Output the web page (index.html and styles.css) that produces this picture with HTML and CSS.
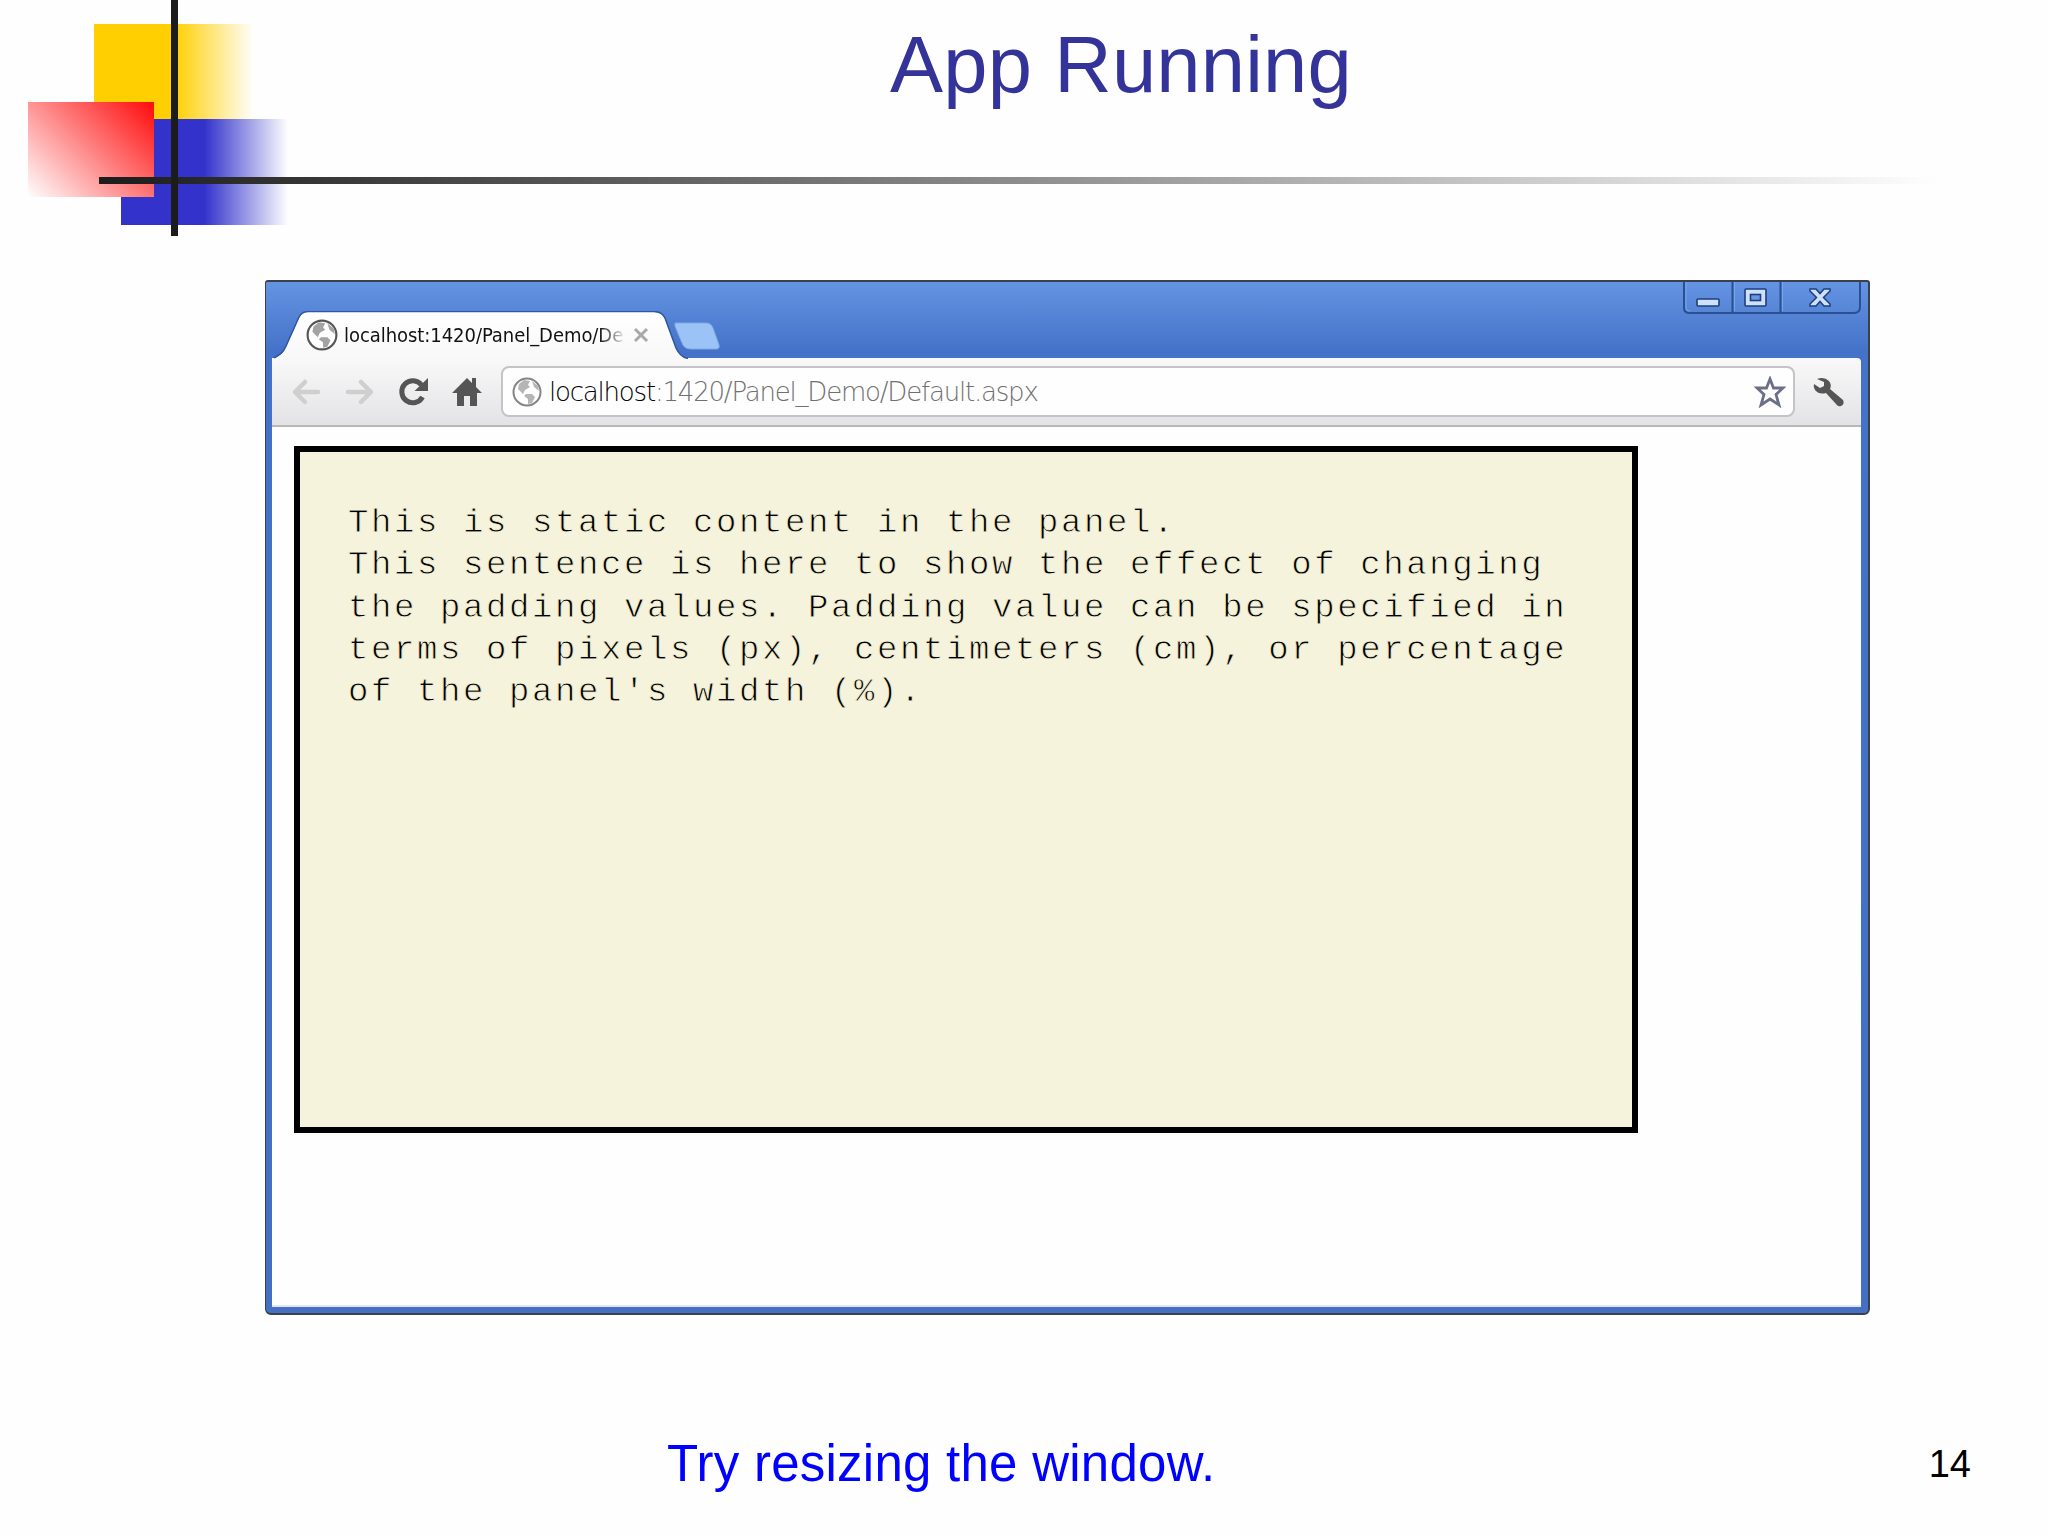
FILE: index.html
```html
<!DOCTYPE html>
<html lang="en">
<head>
  <meta charset="UTF-8" />
  <meta name="viewport" content="width=device-width, initial-scale=1.0"/>
  <title>App Running</title>
  <link rel="stylesheet" href="styles.css">
</head>
<body>
<div class="slide">
  <!-- Slide theme decoration -->
  <div class="deco" aria-hidden="true">
    <div class="square yellow"></div>
    <div class="square blue"></div>
    <div class="square red"></div>
    <div class="bar-h"></div>
    <div class="bar-v"></div>
  </div>
  <h1>App Running</h1>

  <div class="window">
    <div class="titlebar">
      <svg class="tab-shape" width="420" height="48" viewBox="0 0 420 48">
        <defs>
          <linearGradient id="tabFill" x1="0" y1="0" x2="0" y2="1">
            <stop offset="0" stop-color="#ffffff"/>
            <stop offset="1" stop-color="#f8f8f9"/>
          </linearGradient>
        </defs>
        <path d="M0 48 C6 44 9 43 12 36 L25 7 Q28 1 34 1 H380 Q388 1 391 8 L402 37 Q406 46 413 48 Z" fill="url(#tabFill)"/>
        <path d="M0 47 C6 43 9 42 12 35 L25 6 Q28 0.5 34 0.5 H380 Q388 0.5 391 7 L402 37 Q406 46 414 47.5" fill="none" stroke="#2f57a0" stroke-width="1.5"/>
      </svg>
      <div class="tab">
        <svg class="globe" width="32" height="32" viewBox="0 0 30 30">
          <circle cx="15" cy="15" r="13.5" fill="#fff" stroke="#555" stroke-width="2"/>
          <path d="M7 7 L12 3 L18 4 L16 8 L18 10 L13 13 L11 17 L6 12 Z M20 4 L26 9 L27 14 L22 10 Z M14 17 L20 17 L23 20 L20 26 L16 27 L16 22 L12 19 Z" fill="#a3a3a3"/>
        </svg>
        <span class="tab-title">localhost:1420/Panel_Demo/De</span>
        <svg class="tab-close" width="16" height="16" viewBox="0 0 16 16">
          <path d="M2 2 L14 14 M14 2 L2 14" stroke="#a9a9a9" stroke-width="3"/>
        </svg>
      </div>
      <svg class="new-tab" width="48" height="28" viewBox="0 0 48 28">
        <path d="M2 1 H33 Q38 1 40 6 L46 23 Q47 27 43 27 H18 Q11 27 9 21 L2 4 Z" fill="#9bc3f5" stroke="#7fabe6" stroke-width="1"/>
      </svg>
      <div class="win-buttons">
        <svg width="178" height="33" viewBox="0 0 178 33">
          <path d="M1 0 V26 Q1 31 7 31 H171 Q177 31 177 25 V0 M49.5 0 V31 M97.5 0 V31" fill="none" stroke="#2a4f92" stroke-width="2"/>
          <path d="M3 0 V26 Q3 29 7 29 M51.5 0 V29 M99.5 0 V29" fill="none" stroke="#7da5ea" stroke-width="1"/>
          <rect x="14" y="17" width="22" height="7" rx="1" fill="#cfe0fb" stroke="#1d3f7d" stroke-width="1.6"/>
          <rect x="62" y="7" width="21" height="17" rx="1" fill="#cfe0fb" stroke="#1d3f7d" stroke-width="1.6"/>
          <rect x="67.5" y="12.5" width="10" height="6" fill="#6b97e2" stroke="#1d3f7d" stroke-width="1.6"/>
          <path d="M127 7 H133 L137 11.5 L141 7 H147 V9 L140.5 15.5 L147 22 V24 H141 L137 19.5 L133 24 H127 V22 L133.5 15.5 L127 9 Z" fill="#cfe0fb" stroke="#1d3f7d" stroke-width="1.5"/>
        </svg>
      </div>
    </div>

    <div class="toolbar">
      <svg class="nav-icons" width="200" height="40" viewBox="0 0 200 40">
        <g fill="none" stroke="#cfcfcf" stroke-width="4.5" stroke-linecap="round" stroke-linejoin="round">
          <path d="M46 20 H24 M33 10 L23 20 L33 30"/>
          <path d="M76 20 H98 M89 10 L99 20 L89 30"/>
        </g>
        <path d="M150.5 25 A11 11 0 1 1 149.5 13" fill="none" stroke="#555" stroke-width="5"/>
        <path d="M156 6 V19 H142.5 Z" fill="#555"/>
        <path d="M180 21 L195 6 L200 11 V6 H204 V15 L210 21 H205 V34 H198 V24 H192 V34 H185 V21 Z" fill="#555"/>
      </svg>
      <div class="address">
        <svg class="globe" width="30" height="30" viewBox="0 0 30 30">
          <circle cx="15" cy="15" r="13.5" fill="#fff" stroke="#858585" stroke-width="2"/>
          <path d="M7 7 L12 3 L18 4 L16 8 L18 10 L13 13 L11 17 L6 12 Z M20 4 L26 9 L27 14 L22 10 Z M14 17 L20 17 L23 20 L20 26 L16 27 L16 22 L12 19 Z" fill="#b5b5b5"/>
        </svg>
        <span class="url"><b>localhost</b>:1420/Panel_Demo/Default.aspx</span>
        <svg class="star" width="32" height="32" viewBox="0 0 32 32">
          <path d="M16 3 L19.5 12 H29 L22 18.5 L25 29 L16 23 L7 29 L10 18.5 L3 12 H12.5 Z" fill="#fff" stroke="#6c7087" stroke-width="2.8"/>
        </svg>
      </div>
      <svg class="wrench" width="34" height="32" viewBox="0 0 34 32">
        <path d="M5 3 Q12 0 17 5 Q20 9 18 13 L31 24 Q33 28 29 30 Q26 31 24 28 L14 17 Q7 19 3 14 Q1 11 2 8 L8 12 L12 10 L12 6 Z" fill="#555"/>
      </svg>
    </div>

    <div class="page">
      <div class="panel">
        This is static content in the panel.<br>
        This sentence is here to show the effect of changing<br>
        the padding values. Padding value can be specified in<br>
        terms of pixels (px), centimeters (cm), or percentage<br>
        of the panel's width (%).
      </div>
    </div>
  </div>

  <div class="footer">
    <p class="hint">Try resizing the window.</p>
    <span class="page-number">14</span>
  </div>
</div>
</body>
</html>
```
FILE: styles.css
```css
* {
  box-sizing: border-box;
}
body {
  margin: 0;
  background: #fefefe;
  font-family: "Liberation Sans", Arial, sans-serif;
}
svg {
  display: block;
  flex-shrink: 0;
}
.slide {
  position: relative;
  width: 2048px;
  height: 1536px;
  overflow: hidden;
}

/* overlapping squares and crossing bars behind the title */
.square, .bar-h, .bar-v {
  position: absolute;
}
.yellow {
  left: 94px;
  top: 24px;
  width: 160px;
  height: 95px;
  background: linear-gradient(to right, #ffcf01 50%, #fefefe);
}
.blue {
  left: 121px;
  top: 119px;
  width: 167px;
  height: 106px;
  background: linear-gradient(to right, #3333cc 50%, #fefefe);
}
.red {
  left: 28px;
  top: 102px;
  width: 126px;
  height: 95px;
  background: linear-gradient(45deg, #fefefe, #ff0a0a);
}
.bar-h {
  left: 99px;
  top: 177px;
  width: 1840px;
  height: 7px;
  background: linear-gradient(to right, #1c1c1c, #fefefe);
}
.bar-v {
  left: 171px;
  top: 0;
  width: 7px;
  height: 236px;
  background: #1c1c1c;
}
h1 {
  margin: 0;
  padding: 19px 0 0 890px;
  height: 280px;
  font-size: 79.5px;
  font-weight: 400;
  line-height: 92px;
  letter-spacing: 0.2px;
  color: #333399;
}

.window {
  width: 1605px;
  height: 1035px;
  margin-left: 265px;
  display: flex;
  flex-direction: column;
  padding: 0 7px 6px 6px;
  border: 2px solid #3c4048;
  border-left-width: 1px;
  border-radius: 3px 3px 6px 6px;
  background: linear-gradient(#6494e2 0, #4472c8 70px, #4370c4 100%);
}
.titlebar {
  position: relative;
  display: flex;
  align-items: flex-end;
  height: 76px;
}
.tab-shape {
  position: absolute;
  left: 2px;
  bottom: -1px;
}
.tab {
  position: relative;
  display: flex;
  align-items: center;
  width: 401px;
  height: 46px;
  padding-left: 34px;
}
.tab-title {
  width: 279px;
  margin-left: 6px;
  overflow: hidden;
  white-space: nowrap;
  font-family: "DejaVu Sans Condensed", "DejaVu Sans", sans-serif;
  font-size: 20px;
  letter-spacing: -0.05px;
  color: transparent;
  background: linear-gradient(to right, #111 255px, #ddd 279px);
  -webkit-background-clip: text;
  background-clip: text;
}
.tab-close {
  margin-left: 10px;
}
.new-tab {
  margin: 0 0 8px;
}
.win-buttons {
  position: absolute;
  right: 0;
  top: 0;
}
.toolbar {
  display: flex;
  align-items: center;
  height: 69px;
  border-bottom: 2px solid #b8b8ba;
  border-radius: 0 4px 0 0;
  background: linear-gradient(#f9f9fa, #e3e2e4);
}
.nav-icons {
  overflow: visible;
  margin-right: 29px;
}
.address {
  display: flex;
  align-items: center;
  width: 1294px;
  height: 51px;
  padding: 0 7px 0 9px;
  border: 2px solid #c4c4c6;
  border-radius: 8px;
  background: #fefefe;
}
.url {
  flex: 1;
  margin-left: 7px;
  font-family: "DejaVu Sans", sans-serif;
  font-size: 26px;
  font-weight: 200;
  letter-spacing: -1.2px;
  color: #707070;
}
.url b {
  font-weight: 200;
  color: #000;
}
.wrench {
  margin-left: 17px;
}
.page {
  flex: 1;
  padding: 19px 22px;
  background: #fefefe;
  border-bottom: 2px solid #e3e5ea;
}
.panel {
  width: 1344px;
  height: 687px;
  padding: 50px 48px;
  border: 6px solid #000;
  background: #f5f3dc;
  font-family: "Liberation Mono", "Courier New", monospace;
  font-size: 34px;
  line-height: 42.3px;
  letter-spacing: 2.6px;
  white-space: nowrap;
  color: #000;
  /* thins the strokes of the monospace face */
  -webkit-text-stroke: 0.8px #f5f3dc;
}

.footer {
  display: flex;
  justify-content: space-between;
  padding: 119px 77px 0 667px;
}
.hint {
  margin: 0;
  font-size: 51px;
  line-height: 60px;
  letter-spacing: 0.25px;
  color: #0000ff;
}
.page-number {
  font-size: 38px;
  line-height: 60px;
  color: #000;
}
```
